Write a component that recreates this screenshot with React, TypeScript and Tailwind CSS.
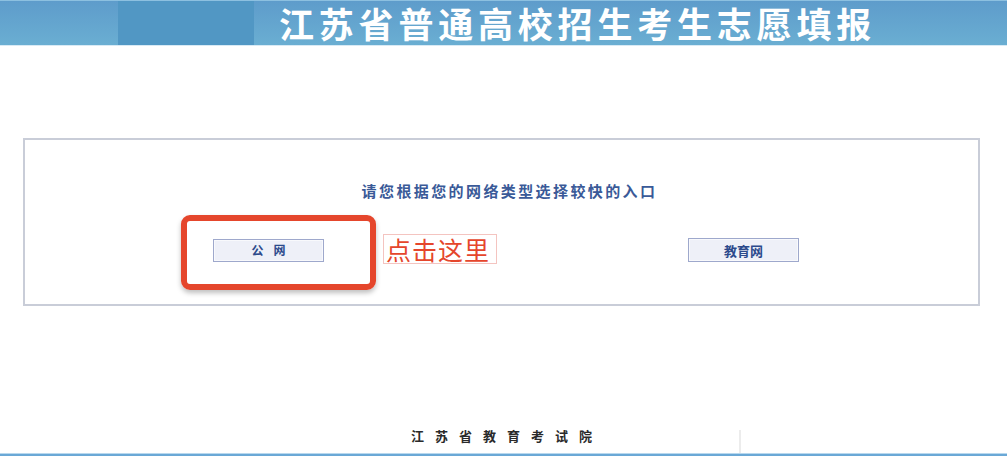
export default function App() {
  const cjk = { fontFamily: '"Noto Sans CJK SC", "Noto Sans", sans-serif' };
  return (
    <div className="relative w-[1007px] h-[456px] bg-white overflow-hidden" style={cjk}>
      {/* header */}
      <div className="relative h-[46px] w-full bg-gradient-to-b from-[#5e9ccb] to-[#6aaed2] border-t border-[#8cc0e0] border-b border-b-[#d8eaf5] flex items-stretch">
        <div className="ml-[118px] w-[136px] bg-[#5197c4]" />
        <div className="ml-[25px] self-center text-white font-bold text-[35px] tracking-[4.8px] leading-[40px] whitespace-nowrap">
          江苏省普通高校招生考生志愿填报
        </div>
      </div>

      {/* main box */}
      <div className="mt-[92px] ml-[23px] w-[957px] h-[168px] border-2 border-[#c9cdd8] relative">
        <div className="mt-[41px] pl-[16px] text-center text-[15px] font-bold text-[#3a5a98] tracking-[2.4px] leading-[20px]">
          请您根据您的网络类型选择较快的入口
        </div>
        <div className="mt-[37px] flex items-center">
          <button className="ml-[188px] w-[111px] h-[23px] bg-[#eef0f8] border border-[#9ea8cc] shadow-[inset_0_0_0_1px_#f8f9fc] text-[12px] font-bold text-[#2c4a8c] tracking-[10px] pl-[10px] leading-none">
            公网
          </button>
          <button className="ml-[364px] w-[111px] h-[24px] bg-[#eef0f8] border border-[#9ea8cc] shadow-[inset_0_0_0_1px_#f8f9fc] text-[13px] font-bold text-[#2c4a8c] leading-none">
            教育网
          </button>
        </div>

        {/* annotations */}
        <div className="absolute left-[156px] top-[75px] w-[195px] h-[75px] rounded-[9px] border-[6px] border-[#e5462c] shadow-[0_3px_5px_rgba(0,0,0,0.25)]" />
        <div className="absolute left-[358px] top-[94px] h-[30px] w-[114px] pl-[2px] border border-[#f4c4c0] text-[#e5462c] text-[25px] leading-[28px] tracking-[1px] whitespace-nowrap">
          点击这里
        </div>
      </div>

      {/* footer */}
      <div className="mt-[122px] pl-[411px] text-[13px] font-bold text-[#2a2a2a] tracking-[11px] leading-[16px]">
        江苏省教育考试院
      </div>
      <div className="absolute left-[739px] top-[430px] w-[2px] h-[24px] bg-[#ececec]" />
      <div className="absolute left-0 bottom-0 w-full h-[3px] bg-[#6aa8d6] border-t border-[#b8d8ee]" />
    </div>
  );
}
